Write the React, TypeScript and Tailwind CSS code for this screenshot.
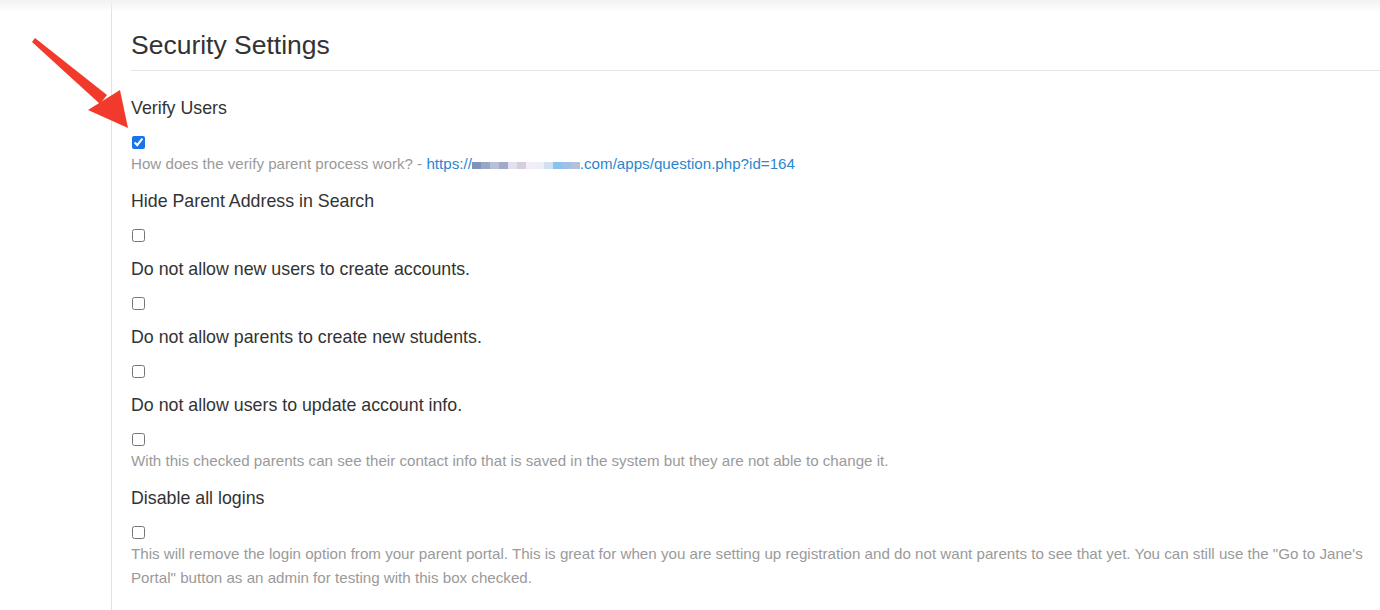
import React from 'react';

const blur = [
  '#8193b8', '#9aa7c4', '#b9bfd6', '#a1abc7', '#e2e0ec', '#d8cde0',
  '#f1eff5', '#eceff6', '#cfe0f0', '#86c3ee', '#9fc0e6', '#b4bfd8',
];

const Setting: React.FC<{ label: string; checked?: boolean; children?: React.ReactNode }> = ({
  label,
  checked,
  children,
}) => (
  <div className={children ? 'mb-[13px]' : 'mb-[15px]'}>
    <label className="block text-[17.8px] leading-6 text-[#333]">{label}</label>
    <div className="mt-4 flex h-[13px] items-center pl-px">
      <input type="checkbox" defaultChecked={checked} className="m-0 h-[13px] w-[13px] accent-[#1a73e8]" />
    </div>
    {children && <p className="mt-[3px] text-[15.15px] leading-6 text-[#9a9a9a]">{children}</p>}
  </div>
);

export default function App() {
  return (
    <div className="relative h-[610px] overflow-hidden bg-white font-['Liberation_Sans',Arial,sans-serif]">
      {/* header shadow */}
      <div className="pointer-events-none absolute inset-x-0 top-0 h-[12px] bg-gradient-to-b from-[#f2f2f2] to-white/0"></div>

      {/* annotation arrow */}
      <svg className="pointer-events-none absolute left-0 top-0" width="140" height="140" viewBox="0 0 140 140">
        <polygon points="32,42 35,38 107,95 100,104" fill="#f23a2c" />
        <polygon points="128,128 88,110 120,90" fill="#f23a2c" />
      </svg>

      <div className="flex h-full">
        <div className="w-[111px] shrink-0"></div>
        <div className="flex-1 border-l border-[#e2e2e2] pl-[19px]">
          <h1 className="mt-[30px] text-[26.5px] leading-[30px] text-[#333]">Security Settings</h1>
          <hr className="mt-[10px] border-t border-[#e5e5e5]" />

          <div className="mt-[25px]">
            <Setting label="Verify Users" checked>
              How does the verify parent process work? -{' '}
              <a className="text-[#2a87cf]" href="#">
                https://
                <span className="inline-flex h-[7px] align-middle">
                  {blur.map((c, i) => (
                    <span key={i} className="h-full w-[9px]" style={{ backgroundColor: c }}></span>
                  ))}
                </span>
                .com/apps/question.php?id=164
              </a>
            </Setting>
            <Setting label="Hide Parent Address in Search" />
            <Setting label="Do not allow new users to create accounts." />
            <Setting label="Do not allow parents to create new students." />
            <Setting label="Do not allow users to update account info.">
              With this checked parents can see their contact info that is saved in the system but they are not able
              to change it.
            </Setting>
            <Setting label="Disable all logins">
              This will remove the login option from your parent portal. This is great for when you are setting up
              registration and do not want parents to see that yet. You can still use the "Go to Jane's Portal" button
              as an admin for testing with this box checked.
            </Setting>
          </div>
        </div>
      </div>
    </div>
  );
}
